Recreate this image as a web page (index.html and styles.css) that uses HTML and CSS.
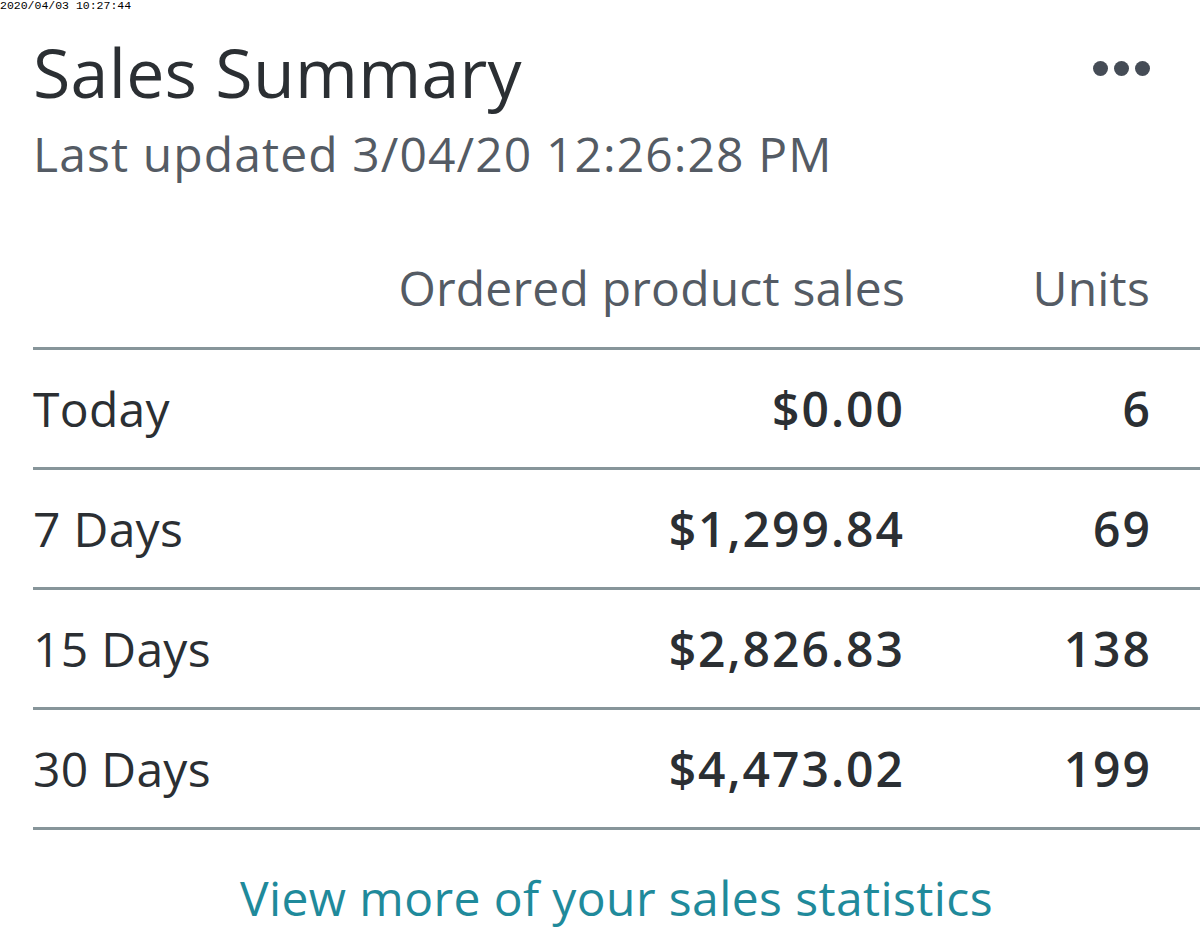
FILE: index.html
```html
<!DOCTYPE html>
<html>
<head>
<meta charset="utf-8">
<link rel="stylesheet" href="styles.css">
</head>
<body>
<div class="stamp">2020/04/03 10:27:44</div>
<div class="card">
  <div class="head">
    <div class="titles">
      <h1 class="title">Sales Summary</h1>
      <div class="sub">Last updated 3/04/20 12:26:28 PM</div>
    </div>
    <div class="more"><span></span><span></span><span></span></div>
  </div>
  <table class="tbl">
    <thead>
      <tr><th class="c-label"></th><th class="c-sales">Ordered product sales</th><th class="c-units">Units</th></tr>
    </thead>
    <tbody>
      <tr><td class="c-label">Today</td><td class="c-sales">$0.00</td><td class="c-units">6</td></tr>
      <tr><td class="c-label">7 Days</td><td class="c-sales">$1,299.84</td><td class="c-units">69</td></tr>
      <tr><td class="c-label">15 Days</td><td class="c-sales">$2,826.83</td><td class="c-units">138</td></tr>
      <tr><td class="c-label">30 Days</td><td class="c-sales">$4,473.02</td><td class="c-units">199</td></tr>
    </tbody>
  </table>
  <div class="foot"><a class="link" href="#">View more of your sales statistics</a></div>
</div>
</body>
</html>
```
FILE: styles.css
```css
html, body { margin: 0; padding: 0; background: #fff; }
body { width: 1200px; height: 952px; overflow: hidden; position: relative; font-family: "Open Sans", "Noto Sans", sans-serif; color: #2e3236; }
.stamp { position: absolute; top: 0; left: 0; font-family: "Liberation Mono", monospace; font-size: 11.5px; line-height: 12px; color: #000; }
.card { padding-left: 33px; }
.head { display: flex; justify-content: space-between; align-items: flex-start; padding-right: 50px; }
.title { margin: 0; padding-top: 30px; font-size: 68px; line-height: 84px; font-weight: 400; color: #2b2f33; letter-spacing: 0.3px; }
.sub { margin-top: 8px; font-size: 48px; line-height: 64px; color: #545b64; letter-spacing: 1.1px; }
.more { display: flex; gap: 6px; padding-top: 61px; }
.more span { width: 15px; height: 15px; border-radius: 50%; background: #454c56; }
.tbl { width: 100%; border-collapse: collapse; margin-top: 19px; }
.tbl th, .tbl td { padding: 0; }
.tbl th { font-weight: 400; font-size: 48px; color: #545b64; height: 113px; vertical-align: bottom; line-height: 60px; padding-bottom: 29px; border-bottom: 3px solid #87959a; letter-spacing: 0.2px; }
.tbl td { font-size: 48px; height: 117px; line-height: 117px; border-bottom: 3px solid #87959a; color: #2b2f33; }
.c-label { text-align: left; letter-spacing: 0.3px; }
.c-sales { text-align: right; font-weight: 600; letter-spacing: 2px; }
.tbl th.c-sales { font-weight: 400; letter-spacing: 0.2px; }
.c-units { text-align: right; width: 245px; padding-right: 50px !important; font-weight: 600; letter-spacing: 2px; }
.tbl td.c-units { padding-right: 48px !important; }
.tbl th.c-units { font-weight: 400; letter-spacing: 0.2px; }
.foot { text-align: center; padding-top: 35px; }
.link { font-size: 48px; color: #1f8a9b; text-decoration: none; letter-spacing: 0.4px; }
```
